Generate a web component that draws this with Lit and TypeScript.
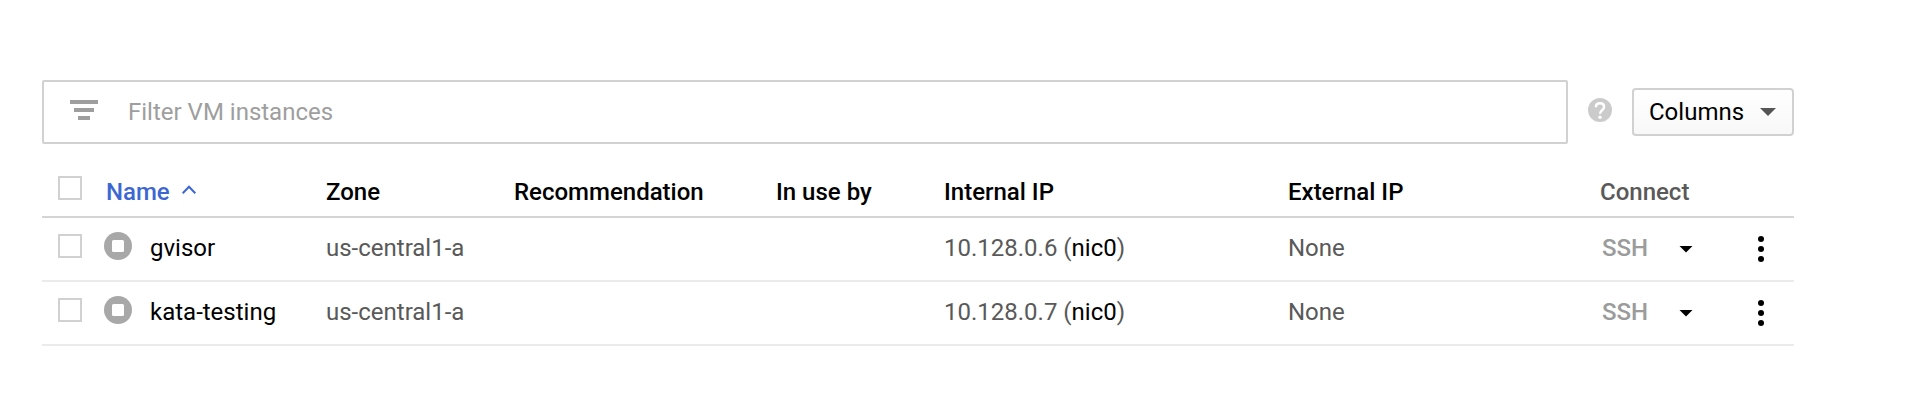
import { LitElement, html, css } from "lit";
import { customElement, property } from "lit/decorators.js";

interface Instance {
  name: string;
  zone: string;
  ip: string;
  nic: string;
  external: string;
}

const INSTANCES: Instance[] = [
  { name: "gvisor", zone: "us-central1-a", ip: "10.128.0.6", nic: "nic0", external: "None" },
  { name: "kata-testing", zone: "us-central1-a", ip: "10.128.0.7", nic: "nic0", external: "None" },
];

@customElement("filter-bar")
class FilterBar extends LitElement {
  static styles = css`
    :host { display: flex; align-items: center; height: 64px; color: #000; }
    .field {
      box-sizing: border-box; width: 1526px; height: 64px; padding-left: 26px;
      display: flex; align-items: center; border: 2px solid #d1d1d1; border-radius: 2px;
      color: #9e9e9e;
    }
    .field svg { display: block; margin: 0 30px 4px 0; }
    .label { line-height: 28px; }
    .help { display: block; margin: 0 20px 4px 20px; }
    .columns {
      box-sizing: border-box; width: 162px; height: 48px; padding: 0 16px 0 15px;
      display: flex; align-items: center; justify-content: space-between;
      border: 2px solid #d1d1d1; border-radius: 4px;
      background: linear-gradient(#fff, #f8f8f8);
    }
  `;
  render() {
    return html`
      <div class="field">
        <svg width="28" height="20" viewBox="0 0 28 20" fill="#9e9e9e">
          <path d="M0 0h28v4H0zM4 8h20v4H4zM8 16h12v4H8z" />
        </svg>
        <span class="label">Filter VM instances</span>
      </div>
      <svg class="help" width="24" height="24" viewBox="0 0 24 24">
        <circle cx="12" cy="12" r="12" fill="#cbcbcb" />
        <path d="M7.900 9.200C7.900 6.800 9.600 5.300 12 5.300s4.100 1.500 4.100 3.700c0 3.200-4.100 3.400-4.100 6.700" fill="none" stroke="#fff" stroke-width="2.400" />
        <circle cx="12" cy="19.300" r="1.700" fill="#fff" />
      </svg>
      <div class="columns">
        <span class="label">Columns</span>
        <svg width="16" height="8" viewBox="0 0 16 8" fill="#555"><path d="M0 0h16l-8 8z" /></svg>
      </div>
    `;
  }
}

@customElement("vm-table")
class VmTable extends LitElement {
  @property({ attribute: false }) rows: Instance[] = [];

  static styles = css`
    :host { display: block; color: #000; }
    .row {
      box-sizing: border-box; height: 64px; padding-left: 16px; border-bottom: 2px solid #ebebeb;
      display: grid; align-items: center;
      grid-template-columns: 46px 222px 188px 262px 168px 344px 312px 78px 1fr;
    }
    .head { height: 74px; padding-top: 22px; border-color: #d4d4d4; font-weight: 500; }
    .cell { line-height: 28px; padding-bottom: 2px; white-space: nowrap; color: #595959; }
    .head .cell { color: #000; padding: 2px 0 0; }
    .head .sorted { color: #3c67d3; padding-left: 2px; display: flex; align-items: center; }
    .sorted svg { margin: 0 0 4px 12px; }
    .head .muted { color: #595959; }
    .box { box-sizing: border-box; width: 24px; height: 24px; border: 2px solid #d1d1d1; margin-bottom: 6px; }
    .name { display: flex; align-items: center; color: #000; }
    .name svg { margin: 0 18px 4px 0; }
    .strong { color: #000; }
    .ssh { color: #9b9b9b; font-weight: 500; padding-left: 2px; }
    .actions { padding-bottom: 2px; }
    svg { display: block; }
  `;
  render() {
    return html`
      <div class="row head">
        <div class="box"></div>
        <div class="cell sorted">Name
          <svg width="14" height="10" viewBox="0 0 14 10" fill="none" stroke="#3c67d3" stroke-width="2">
            <path d="M.7 8.200L7 1.700l6.300 6.500" />
          </svg>
        </div>
        <div class="cell">Zone</div>
        <div class="cell">Recommendation</div>
        <div class="cell">In use by</div>
        <div class="cell">Internal IP</div>
        <div class="cell">External IP</div>
        <div class="cell muted">Connect</div>
      </div>
      ${this.rows.map(
        (r) => html`
          <div class="row">
            <div class="box"></div>
            <div class="cell name">
              <svg width="28" height="28" viewBox="0 0 28 28">
                <circle cx="14" cy="14" r="14" fill="#a8a8a8" />
                <rect x="8" y="8" width="12" height="12" rx="1.500" fill="#fff" />
              </svg>
              ${r.name}
            </div>
            <div class="cell">${r.zone}</div>
            <div></div>
            <div></div>
            <div class="cell">${r.ip} (<span class="strong">${r.nic}</span>)</div>
            <div class="cell">${r.external}</div>
            <div class="cell ssh">SSH</div>
            <div class="actions">
              <svg width="100" height="28" viewBox="0 0 100 28">
                <path d="M1.500 12h13l-6.500 6.500z" />
                <circle cx="83" cy="5" r="3" />
                <circle cx="83" cy="15" r="3" />
                <circle cx="83" cy="25" r="3" />
              </svg>
            </div>
          </div>
        `,
      )}
    `;
  }
}

@customElement("app-root")
class AppRoot extends LitElement {
  static styles = css`
    :host {
      display: block; box-sizing: border-box; width: 1908px; height: 400px;
      padding: 80px 114px 0 42px; background: #fff;
      font: 400 24px Roboto, sans-serif;
    }
  `;
  render() {
    return html`<filter-bar></filter-bar><vm-table .rows=${INSTANCES}></vm-table>`;
  }
}
